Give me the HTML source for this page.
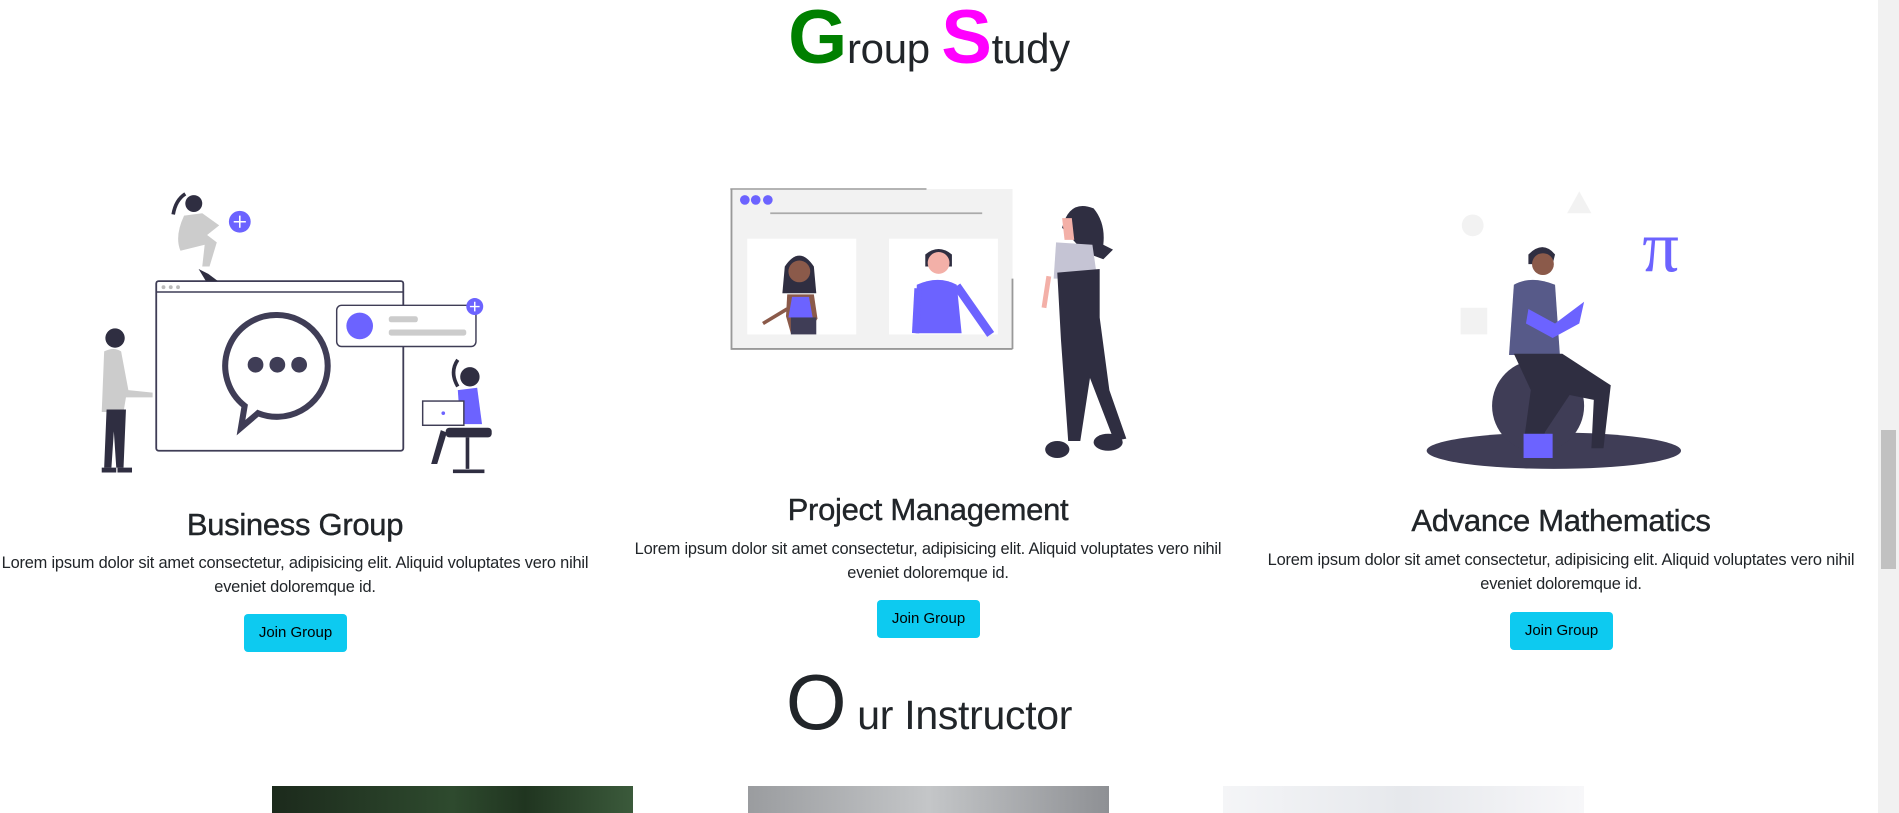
<!DOCTYPE html>
<html><head><meta charset="utf-8"><style>
html,body{margin:0;padding:0;width:1899px;height:813px;overflow:hidden;background:#fff;font-family:"Liberation Sans",sans-serif;color:#212529;position:relative}
.abs{position:absolute}
.t{position:absolute;white-space:nowrap;text-align:center;transform:translateX(-50%)}
h3{margin:0;font-weight:400;font-size:31px;letter-spacing:-0.3px;-webkit-text-stroke:0.4px #212529}
.p{font-size:16.4px;line-height:24px;letter-spacing:-0.2px}
.btn{position:absolute;background:#0dcaf0;border-radius:4px;width:103px;height:38px;font-size:15px;line-height:38px;text-align:center;color:#000}
.sb{position:absolute;left:1878px;top:0;width:21px;height:813px;background:#f1f1f1}
.thumb{position:absolute;left:1881px;top:430px;width:15px;height:139px;background:#c1c1c1}
</style></head><body>

<div class="t" style="left:929px;top:0px;font-size:42px;letter-spacing:-0.3px;line-height:76px"><span style="color:#008000;font-size:76px;font-weight:bold">G</span>roup <span style="color:#ff00ff;font-size:76px;font-weight:bold">S</span>tudy</div>

<svg class="abs" style="left:0;top:0" width="1899" height="813" viewBox="0 0 1568 671" preserveAspectRatio="none">
<!-- col1 -->
<rect x="129" y="232" width="204" height="140" fill="#fff" stroke="#3f3d56" stroke-width="1.5" rx="2"/>
<line x1="129" y1="241" x2="333" y2="241" stroke="#3f3d56" stroke-width="1.2"/>
<circle cx="135" cy="237" r="1.6" fill="#bbb"/><circle cx="141" cy="237" r="1.6" fill="#bbb"/><circle cx="147" cy="237" r="1.6" fill="#bbb"/>
<path d="M229 260a42 42 0 1 1 -16 81l-14 12l3-18a42 42 0 0 1 27-75z" fill="none" stroke="#3f3d56" stroke-width="5"/>
<circle cx="211" cy="301" r="6.5" fill="#3f3d56"/><circle cx="229" cy="301" r="6.5" fill="#3f3d56"/><circle cx="247" cy="301" r="6.5" fill="#3f3d56"/>
<rect x="278" y="252" width="115" height="34" rx="4" fill="#fff" stroke="#3f3d56" stroke-width="1.2"/>
<circle cx="297" cy="269" r="11" fill="#6c63ff"/>
<rect x="321" y="261" width="24" height="5" rx="2" fill="#ccc"/><rect x="321" y="272" width="64" height="5" rx="2" fill="#ccc"/>
<circle cx="392" cy="253" r="7" fill="#6c63ff"/><path d="M388 253h8M392 249v8" stroke="#fff" stroke-width="1.2"/>
<circle cx="160" cy="168" r="7" fill="#2f2e41"/><path d="M153 160q-8 5-10 17" stroke="#2f2e41" stroke-width="3" fill="none"/>
<path d="M152 178l15-2 14 10-10 8 8 6-6 20h-6l2-18-20 5q-5-12 3-29z" fill="#ccc"/>
<path d="M164 222l6 10h10l-8-6z" fill="#2f2e41"/>
<circle cx="198" cy="183" r="9" fill="#6c63ff"/><path d="M193 183h10M198 178v10" stroke="#fff" stroke-width="1.3"/>
<circle cx="95" cy="279" r="8" fill="#2f2e41"/>
<path d="M86 290q8-4 14 0l6 32 20 2v4l-22 0 -2 12h-18z" fill="#ccc"/>
<path d="M88 338h16l-2 48h-6l-2-30-2 30h-6z" fill="#2f2e41"/>
<path d="M84 386h12v4h-12zM97 386h12v4h-12z" fill="#2f2e41"/>
<circle cx="388" cy="311" r="8" fill="#2f2e41"/><path d="M378 297q-7 10 0 22" stroke="#2f2e41" stroke-width="3" fill="none"/>
<path d="M378 322l16-2 4 30h-18z" fill="#6c63ff"/>
<rect x="349" y="331" width="34" height="20" fill="#fff" stroke="#3f3d56" stroke-width="1.2"/><circle cx="366" cy="341" r="1.5" fill="#6c63ff"/>
<rect x="368" y="353" width="38" height="8" rx="3" fill="#2f2e41"/>
<path d="M364 355l-8 28h5l8-26z" fill="#2f2e41"/><path d="M386 361v26M374 389h26" stroke="#2f2e41" stroke-width="3"/>
<!-- col2 -->
<rect x="603" y="156" width="233" height="132" fill="#f2f2f2"/>
<line x1="603" y1="156" x2="765" y2="156" stroke="#aaa" stroke-width="1.5"/>
<path d="M604 156v132h232M836 230v58" stroke="#999" stroke-width="1.5" fill="none"/>
<circle cx="615" cy="165" r="4" fill="#6c63ff"/><circle cx="624" cy="165" r="4" fill="#6c63ff"/><circle cx="634" cy="165" r="4" fill="#6c63ff"/>
<line x1="636" y1="176" x2="811" y2="176" stroke="#aaa" stroke-width="1.5"/>
<rect x="617" y="197" width="90" height="79" fill="#fff"/><rect x="734" y="197" width="90" height="79" fill="#fff"/>
<path d="M648 220q12-18 24 0l2 22h-28z" fill="#2f2e41"/><circle cx="660" cy="224" r="9" fill="#8b5a4a"/>
<path d="M650 243h22l3 20-8 12h-14l-4-14z" fill="#8b5a4a"/><path d="M654 245h14l3 17h-20z" fill="#6c63ff"/>
<rect x="653" y="262" width="21" height="14" fill="#3f3d56"/><path d="M650 255l-20 12" stroke="#8b5a4a" stroke-width="3"/>
<path d="M764 210q11-9 22 0v10h-22z" fill="#2f2e41"/><circle cx="775" cy="217" r="9" fill="#f3b0a8"/>
<path d="M757 235q18-8 33 0l4 40h-38z" fill="#6c63ff"/><path d="M790 236l28 40" stroke="#6c63ff" stroke-width="7"/><path d="M758 238l-2 37" stroke="#6c63ff" stroke-width="6"/>
<path d="M877 188q6-24 26-16 10 12 8 30l8 4-8 8-16-6z" fill="#2f2e41"/><path d="M877 180l8 0 2 18-8 0z" fill="#f3b0a8"/>
<path d="M872 200l30 2 4 28-36 0z" fill="#c5c4d4"/>
<path d="M873 225l35-3 0 40 8 60 14 40-10 2-20-52-8 52-10 0-6-84z" fill="#2f2e41"/>
<path d="M866 228l-4 26" stroke="#f3b0a8" stroke-width="4"/>
<ellipse cx="873" cy="371" rx="10" ry="7" fill="#2f2e41"/><ellipse cx="915" cy="365" rx="12" ry="7" fill="#2f2e41"/>
<!-- col3 -->
<circle cx="1216" cy="186" r="9" fill="#f2f2f2"/><path d="M1304 158l10 18h-20z" fill="#f2f2f2"/><rect x="1206" y="254" width="22" height="22" fill="#f2f2f2"/>
<text x="1356" y="224" font-family="Liberation Serif,serif" font-size="60" fill="#6c63ff">π</text>
<ellipse cx="1283" cy="372" rx="105" ry="15" fill="#3f3d56"/>
<circle cx="1270" cy="335" r="38" fill="#3f3d56"/>
<path d="M1262 210q12-12 22 0l-2 8h-20z" fill="#2f2e41"/><circle cx="1274" cy="218" r="9" fill="#8b5a4a"/>
<path d="M1250 235q14-8 34 0l4 58h-42z" fill="#575a89"/>
<path d="M1262 255l22 12 24-18-4 18-22 12-22-12z" fill="#6c63ff"/>
<path d="M1250 292h40l40 26-6 52-10 0 2-40-20-4-20 30-4 10h-14l6-44z" fill="#2f2e41"/>
<rect x="1258" y="358" width="24" height="20" fill="#6c63ff"/>
</svg>

<h3 class="t" style="left:295px;top:507px">Business Group</h3>
<div class="t p" style="left:295px;top:551px">Lorem ipsum dolor sit amet consectetur, adipisicing elit. Aliquid voluptates vero nihil<br>eveniet doloremque id.</div>
<div class="btn" style="left:244px;top:614px">Join Group</div>

<h3 class="t" style="left:928px;top:492px">Project Management</h3>
<div class="t p" style="left:928px;top:537px">Lorem ipsum dolor sit amet consectetur, adipisicing elit. Aliquid voluptates vero nihil<br>eveniet doloremque id.</div>
<div class="btn" style="left:877px;top:600px">Join Group</div>

<h3 class="t" style="left:1561px;top:503px">Advance Mathematics</h3>
<div class="t p" style="left:1561px;top:548px">Lorem ipsum dolor sit amet consectetur, adipisicing elit. Aliquid voluptates vero nihil<br>eveniet doloremque id.</div>
<div class="btn" style="left:1510px;top:612px">Join Group</div>

<div class="t" style="left:929px;top:660px;font-size:41px;line-height:84px;letter-spacing:-0.3px"><span style="font-size:78px">O</span> ur Instructor</div>

<div class="abs" style="left:272px;top:786px;width:361px;height:27px;background:linear-gradient(90deg,#1c2a1c,#2e4a2e 50%,#203520 70%,#3b5a3b)"></div>
<div class="abs" style="left:748px;top:786px;width:361px;height:27px;background:linear-gradient(90deg,#9a9c9f,#c4c6c8 50%,#8e9094)"></div>
<div class="abs" style="left:1223px;top:786px;width:361px;height:27px;background:linear-gradient(90deg,#f4f5f7,#e6e8ec 50%,#f7f7f9)"></div>

<div class="sb"></div><div class="thumb"></div>
</body></html>
